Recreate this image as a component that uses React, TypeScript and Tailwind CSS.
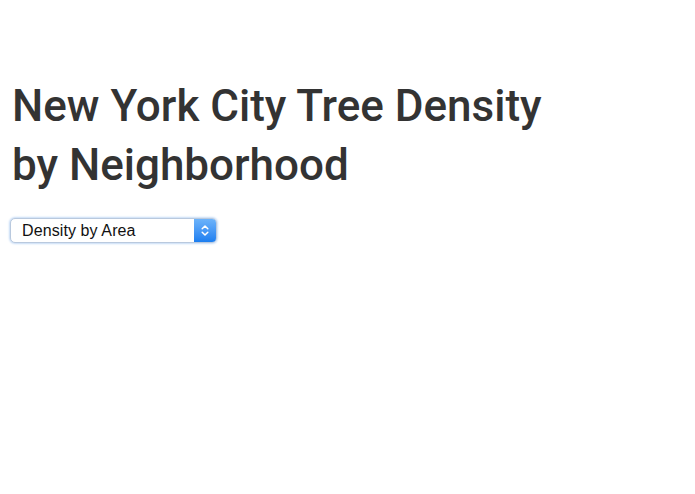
import React from "react"

export default function App() {
  return (
    <div className="min-h-[494px] w-[695px] bg-white px-3 pt-[77px]">
      <h1
        className="text-[44px] font-medium leading-[59px] text-[#333333]"
        style={{ fontFamily: "Roboto, 'Noto Sans', sans-serif" }}
      >
        New York City Tree Density
        <br />
        by Neighborhood
      </h1>
      <div className="mt-[23px] -ml-[2px] flex h-[25px] w-[207px] items-stretch rounded-[5px] border border-[#b9c9de] bg-white shadow-[0_0_2px_1px_#c7dcf6]">
        <div
          className="flex flex-1 items-center pl-[11px] text-[16px] tracking-[0.1px] text-[#111111]"
          style={{ fontFamily: "'Liberation Sans', Arial, sans-serif" }}
        >
          Density by Area
        </div>
        <div className="flex w-[22px] items-center justify-center rounded-r-[4px] bg-gradient-to-b from-[#6cb3fa] to-[#1a7ef0]">
          <svg width="8" height="13" viewBox="0 0 8 13" fill="none">
            <path d="M1.2 4.8 L4 2 L6.8 4.8" stroke="white" strokeWidth="1.5" strokeLinecap="round" strokeLinejoin="round" />
            <path d="M1.2 8.2 L4 11 L6.8 8.2" stroke="white" strokeWidth="1.5" strokeLinecap="round" strokeLinejoin="round" />
          </svg>
        </div>
      </div>
    </div>
  )
}
